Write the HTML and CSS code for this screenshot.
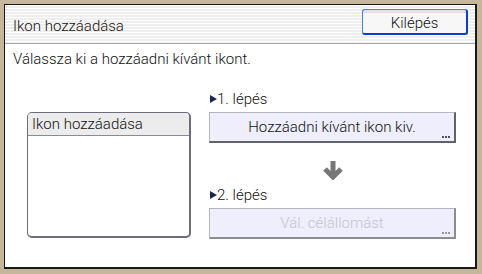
FILE: index.html
```html
<!DOCTYPE html>
<html lang="hu">
<head>
  <meta charset="UTF-8">
  <meta name="viewport" content="width=device-width, initial-scale=1.0">
  <title>Ikon hozzáadása</title>
  <link rel="stylesheet" href="styles.css">
</head>
<body>
  <div class="window">
    <div class="header">
      <div class="title">Ikon hozzáadása</div>
      <button type="button" class="exit-btn">Kilépés</button>
    </div>

    <p class="hint">Válassza ki a hozzáadni kívánt ikont.</p>

    <div class="main">
      <div class="icon-list">
        <div class="icon-list-head">Ikon hozzáadása</div>
      </div>

      <div class="steps">
        <div class="step-label">
          <svg class="tri" width="7" height="8" viewBox="0 0 7 8"><polygon points="0,0 7,4 0,8" fill="#1c2452"/></svg>
          1. lépés
        </div>
        <button type="button" class="step-btn">
          Hozzáadni kívánt ikon kiv.
          <svg class="dots" width="9" height="2" viewBox="0 0 9 2"><rect x="0" y="0" width="2" height="2"/><rect x="3" y="0" width="2" height="2"/><rect x="6" y="0" width="2" height="2"/></svg>
        </button>

        <div class="arrow">
          <svg width="22" height="20" viewBox="0 0 22 20"><path d="M11 1 V16 M3 9 L11 17 L19 9" stroke="#777" stroke-width="5" fill="none"/></svg>
        </div>

        <div class="step-label">
          <svg class="tri" width="7" height="8" viewBox="0 0 7 8"><polygon points="0,0 7,4 0,8" fill="#1c2452"/></svg>
          2. lépés
        </div>
        <button type="button" class="step-btn" disabled>
          Vál. célállomást
          <svg class="dots" width="9" height="2" viewBox="0 0 9 2"><rect x="0" y="0" width="2" height="2"/><rect x="3" y="0" width="2" height="2"/><rect x="6" y="0" width="2" height="2"/></svg>
        </button>
      </div>
    </div>
  </div>
</body>
</html>
```

FILE: styles.css
```css
body {
  margin: 0;
  background: #c6b69b;
  font-family: Roboto, "Liberation Sans", sans-serif;
  font-weight: 300;
  font-size: 15px;
  color: #111;
}

.window {
  margin: 4px 0 0 4px;
  width: 470px;
  height: 262px;
  background: #fff;
  border-left: 1px solid #1a1a1a;
  border-top: 1px solid #1a1a1a;
  border-right: 2px solid #1a1a1a;
  border-bottom: 2px solid #1a1a1a;
}

.header {
  display: flex;
  justify-content: space-between;
  align-items: flex-start;
  height: 38px;
  border-bottom: 1px solid #a8a8a8;
  background: repeating-linear-gradient(#ffffff 0 1px, #eeeeee 1px 3px);
}

.title {
  margin: 12px 0 0 8px;
  line-height: 18px;
}

.exit-btn {
  margin: 4px 7px 0 0;
  width: 106px;
  height: 26px;
  padding: 3px 0 0;
  font: inherit;
  line-height: 18px;
  color: #111;
  border-top: 1px solid #3c86f0;
  border-left: 1px solid #3c86f0;
  border-right: 2px solid #0c3fc6;
  border-bottom: 2px solid #0c3fc6;
  border-radius: 3px;
  background: linear-gradient(#e2e2e2 0 3px, #f7f7f7 3px);
}

.hint {
  margin: 6px 0 0 8px;
  line-height: 18px;
}

.main {
  display: flex;
  align-items: flex-start;
  margin-top: 22px;
}

.icon-list {
  margin: 22px 0 0 22px;
  width: 161px;
  height: 123px;
  border-top: 1px solid #6c6c7a;
  border-left: 1px solid #6c6c7a;
  border-right: 2px solid #6c6c7a;
  border-bottom: 2px solid #6c6c7a;
  border-radius: 5px;
  overflow: hidden;
}

.icon-list-head {
  height: 22px;
  padding-left: 4px;
  line-height: 22px;
  background: #ececec;
  border-bottom: 1px solid #8a8a94;
}

.steps {
  display: flex;
  flex-direction: column;
  margin-left: 18px;
}

.step-label {
  display: flex;
  align-items: center;
  line-height: 18px;
  height: 18px;
}

.tri {
  margin: 0 0 0 1px;
}

.step-btn {
  position: relative;
  margin-top: 4px;
  width: 247px;
  height: 31px;
  padding: 0;
  font: inherit;
  color: #111;
  background: #eeeefc;
  border-top: 1px solid #b4b4bc;
  border-left: 1px solid #b4b4bc;
  border-right: 2px solid #60606e;
  border-bottom: 2px solid #60606e;
}

.step-btn:disabled {
  color: #c4c4cc;
  border-right-color: #8c8c96;
  border-bottom-color: #8c8c96;
}

.dots {
  position: absolute;
  right: 3px;
  bottom: 3px;
  fill: #50505c;
}

.step-btn:disabled .dots {
  fill: #9a9aa4;
}

.arrow {
  display: flex;
  justify-content: center;
  margin: 17px 0 6px;
}
```
